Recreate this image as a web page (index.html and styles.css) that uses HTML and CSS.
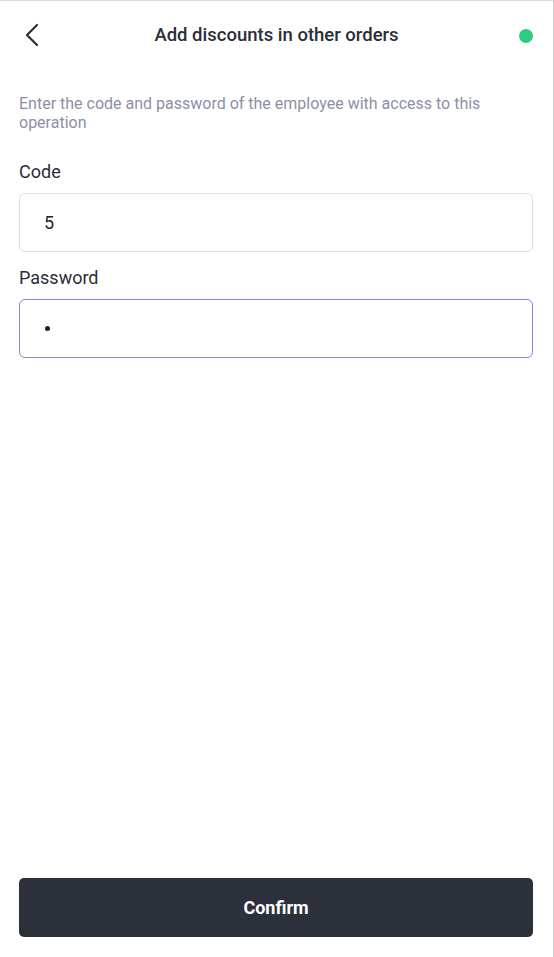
FILE: index.html
```html
<!DOCTYPE html>
<html lang="en">
<head>
<meta charset="utf-8">
<title>Add discounts in other orders</title>
<link rel="stylesheet" href="styles.css">
</head>
<body>
<div class="screen">
  <header class="topbar">
    <button class="back" aria-label="Back">
      <svg width="16" height="24" viewBox="0 0 16 24"><path d="M13 2 L3 12 L13 22" fill="none" stroke="#2a2e38" stroke-width="2.2" stroke-linecap="round" stroke-linejoin="round"/></svg>
    </button>
    <h1 class="title">Add discounts in other orders</h1>
    <span class="status-dot"></span>
  </header>
  <main class="content">
    <p class="hint">Enter the code and password of the employee with access to this operation</p>
    <label class="field-label">Code</label>
    <div class="field">5</div>
    <label class="field-label">Password</label>
    <div class="field field-active"><span class="pw-dot"></span></div>
  </main>
  <footer class="actions">
    <button class="confirm">Confirm</button>
  </footer>
</div>
</body>
</html>
```

FILE: styles.css
```css
* { box-sizing: border-box; }
html, body { margin: 0; padding: 0; background: #fff; }
body { font-family: Roboto, "Liberation Sans", sans-serif; color: #2a2e38; }
.screen {
  width: 554px;
  height: 957px;
  display: flex;
  flex-direction: column;
  border-top: 1px solid #dcdcdc;
  border-right: 1px solid #cfcfcf;
}
.topbar {
  height: 69px;
  display: flex;
  align-items: center;
  padding: 0 20px 0 19px;
  position: relative;
}
.back {
  background: none;
  border: 0;
  padding: 0;
  width: 24px;
  height: 28px;
  display: flex;
  align-items: center;
  justify-content: center;
  margin-left: 1px;
  margin-top: -1px;
}
.title {
  flex: 1;
  text-align: center;
  margin: 0;
  font-size: 18.5px;
  font-weight: 500;
  color: #2a2e38;
  margin-top: -1px;
  padding-right: 10px;
}
.status-dot {
  width: 14px;
  height: 14px;
  border-radius: 50%;
  background: #2ecc7f;
}
.content {
  flex: 1;
  padding: 24px 20px 0 19px;
  display: flex;
  flex-direction: column;
}
.hint {
  margin: 0;
  font-size: 16px;
  line-height: 19px;
  color: #8c8fa8;
  padding-right: 20px;
}
.field-label {
  font-size: 18px;
  line-height: 21px;
  color: #2a2e38;
}
.hint + .field-label { margin-top: 29px; }
.field {
  margin-top: 11px;
  height: 59px;
  border: 1px solid #dedcef;
  border-radius: 6px;
  display: flex;
  align-items: center;
  padding-left: 24px;
  font-size: 18px;
  color: #1f2229;
}
.field + .field-label { margin-top: 15px; }
.field-active { border-color: #8a7fe2; }
.pw-dot {
  width: 5px;
  height: 5px;
  border-radius: 50%;
  background: #1f2229;
  margin-left: 1px;
}
.actions {
  padding: 0 20px 20px 19px;
}
.confirm {
  width: 100%;
  height: 59px;
  border: 0;
  border-radius: 5px;
  background: #2c303b;
  color: #fff;
  font-family: Roboto, "Liberation Sans", sans-serif;
  font-size: 18px;
  font-weight: 700;
}
```
